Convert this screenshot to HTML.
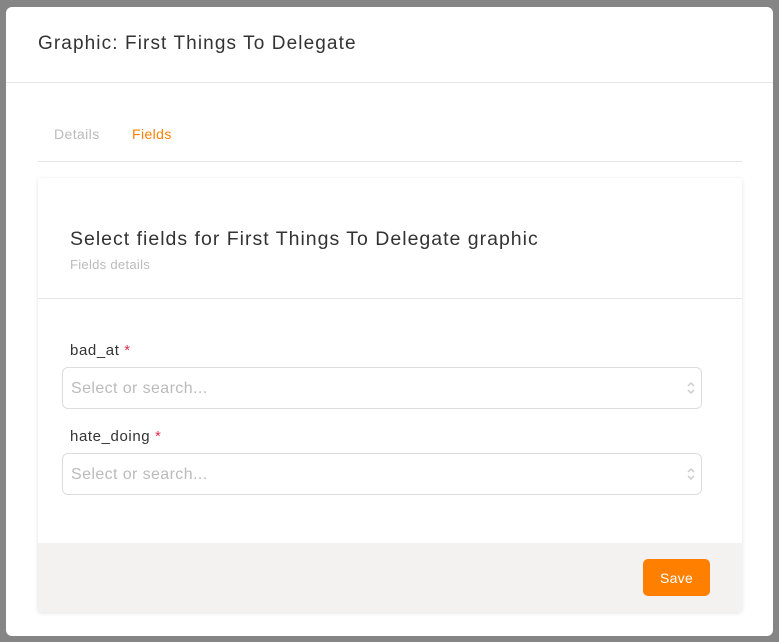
<!DOCTYPE html>
<html><head><style>
*{box-sizing:border-box;margin:0;padding:0}
body{width:779px;height:642px;background:#858585;font-family:"Liberation Sans",sans-serif;position:relative;overflow:hidden}
.modal{position:absolute;left:6px;top:7px;width:767px;height:629px;background:#fff;border-radius:6px}
.hdr{height:76px;border-bottom:1px solid #e6e6e6;padding:26px 0 0 32px;font-size:19px;letter-spacing:1.1px;color:#333}
.tabs{position:absolute;left:32px;top:113px;width:704px;height:42px;border-bottom:1px solid #e6e6e6;font-size:14px;letter-spacing:.4px}
.tabs span{position:absolute;top:6px}
.card{position:absolute;left:32px;top:171px;width:704px;height:434px;background:#fff;box-shadow:0 1px 4px rgba(0,0,0,.12);border-radius:3px;overflow:hidden}
.ct{position:absolute;left:32px;top:50px;font-size:19.5px;letter-spacing:1px;color:#333}
.cs{position:absolute;left:32px;top:79px;font-size:13px;letter-spacing:.3px;color:#bbb}
.div{position:absolute;left:0;top:120px;width:704px;border-top:1px solid #e6e6e6}
.lbl{position:absolute;left:32px;font-size:15px;letter-spacing:.6px;color:#333}
.lbl b{color:#e03050;font-weight:normal}
.inp{position:absolute;left:24px;width:640px;height:42px;border:1px solid #ddd;border-radius:6px;font-size:16px;letter-spacing:.4px;color:#bbb;padding:12px 0 0 8px}
.inp svg{position:absolute;right:5px;top:12px}
.ft{position:absolute;left:0;top:365px;width:704px;height:69px;background:#f3f2f1}
.btn{position:absolute;left:605px;top:16px;width:67px;height:37px;background:#ff8000;border-radius:5px;color:#fff;font-size:14px;letter-spacing:.3px;text-align:center;line-height:38px}
</style></head><body>
<div class="modal">
<div class="hdr">Graphic: First Things To Delegate</div>
<div class="tabs"><span style="left:16px;color:#bbb">Details</span><span style="left:94px;color:#ff8000">Fields</span></div>
<div class="card">
<div class="ct">Select fields for First Things To Delegate graphic</div>
<div class="cs">Fields details</div>
<div class="div"></div>
<div class="lbl" style="top:164px">bad_at <b>*</b></div>
<div class="inp" style="top:189px">Select or search...<svg width="10" height="16" viewBox="0 0 10 16"><path d="M2 6L5 3L8 6M2 10L5 13L8 10" fill="none" stroke="#ccc" stroke-width="1.5"/></svg></div>
<div class="lbl" style="top:250px">hate_doing <b>*</b></div>
<div class="inp" style="top:275px">Select or search...<svg width="10" height="16" viewBox="0 0 10 16"><path d="M2 6L5 3L8 6M2 10L5 13L8 10" fill="none" stroke="#ccc" stroke-width="1.5"/></svg></div>
<div class="ft"><div class="btn">Save</div></div>
</div>
</div>
</body></html>
